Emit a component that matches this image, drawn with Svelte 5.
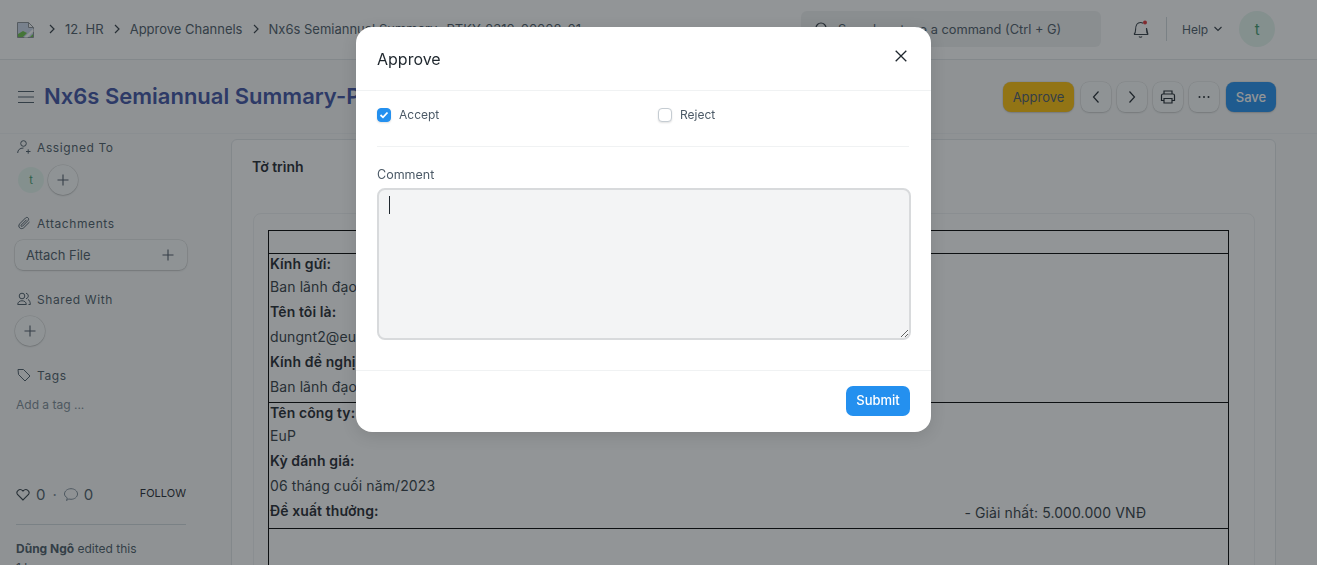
<script>
  let accepted = $state(true);
  let rejected = $state(false);

  const crumbs = ['12. HR', 'Approve Channels', 'Nx6s Semiannual Summary- PTKY-2310-00008-01'];
</script>

{#snippet plus()}
  <svg width="12" height="12" viewBox="0 0 12 12" fill="none" stroke="#4c5a67" stroke-width="1.1"><path d="M6 .5v11M.5 6h11" /></svg>
{/snippet}

<div class="page">
  <header class="navbar">
    <svg class="logo" width="17" height="16" viewBox="0 0 17 16">
      <path d="M.5.5h11l5 5v10H.5z" fill="#cdd9ec" stroke="#8a9096" />
      <path d="M11.500.5v5h5z" fill="#fff" stroke="#8a9096" />
      <path d="M1 15v-3l5-3 4 2-4 4z" fill="#6cc24a" />
      <path d="M13 15l3-3v3z" fill="#6cc24a" />
      <path d="M7 15.500l9.500-9v3l-6 6z" fill="#fff" />
    </svg>
    <nav class="crumbs">
      {#each crumbs as crumb}
        <svg width="8" height="10" viewBox="0 0 8 10" fill="none" stroke="#333c44" stroke-width="1.2"><path d="M2 1l4 4-4 4" /></svg>
        <span>{crumb}</span>
      {/each}
    </nav>
    <div class="search">
      <svg width="16" height="16" viewBox="0 0 16 16" fill="none" stroke="#333c44" stroke-width="1.2"><circle cx="7" cy="7" r="5" /><path d="M11 11l3.5 3.5" /></svg>
      <span>Search or type a command (Ctrl + G)</span>
    </div>
    <svg class="bell" width="18" height="20" viewBox="0 0 18 20" fill="none" stroke="#333c44" stroke-width="1.1">
      <path d="M2 15.500c1.300-1.200 1.600-2.500 1.600-5C3.600 6 5.500 3.500 8.500 3.500c1 0 1.800.2 2.500.7M14.500 9v2c0 2 .5 3.300 1.500 4.500zM2 15.500h14M7 17.500c.6 1 2.400 1 3 0" />
      <circle cx="13" cy="3.500" r="2" fill="#e0353b" stroke="none" />
    </svg>
    <i class="nav-divider"></i>
    <span class="help">Help
      <svg width="10" height="6" viewBox="0 0 10 6" fill="none" stroke="#333c44" stroke-width="1.1"><path d="M1.500 1l3.500 3.500L8.500 1" /></svg>
    </span>
    <span class="avatar big">t</span>
  </header>

  <div class="head">
    <svg class="burger" width="16" height="12" viewBox="0 0 16 12" fill="none" stroke="#4c5a67" stroke-width="1.1"><path d="M0 .5h16M0 6h16M0 11.500h16" /></svg>
    <h1>Nx6s Semiannual Summary-PTKY-2310-00008-01</h1>
    <div class="actions">
      <button class="btn approve">Approve</button>
      <button class="btn icon" aria-label="Previous">
        <svg width="10" height="14" viewBox="0 0 10 14" fill="none" stroke="#1f272e" stroke-width="1.2"><path d="M7.500 1.500L2.500 7l5 5.500" /></svg>
      </button>
      <button class="btn icon" aria-label="Next">
        <svg width="10" height="14" viewBox="0 0 10 14" fill="none" stroke="#1f272e" stroke-width="1.2"><path d="M2.500 1.500L7.500 7l-5 5.500" /></svg>
      </button>
      <button class="btn icon" aria-label="Print">
        <svg width="16" height="14" viewBox="0 0 16 14" fill="none" stroke="#1f272e" stroke-width="1.2"><path d="M4 4V1h8v3M4 10.500H1.500V5.500q0-1.500 1.500-1.500h10q1.500 0 1.500 1.500v5H12M4 8.500h8v4.500H4z" /></svg>
      </button>
      <button class="btn icon" aria-label="More">
        <svg width="12" height="4" viewBox="0 0 12 4" fill="#1f272e"><circle cx="1.500" cy="2" r="1" /><circle cx="6" cy="2" r="1" /><circle cx="10.500" cy="2" r="1" /></svg>
      </button>
      <button class="btn save">Save</button>
    </div>
  </div>

  <div class="body">
    <aside class="sidebar">
      <section class="assigned">
        <h4>
          <svg width="14" height="14" viewBox="0 0 14 14" fill="none" stroke="#4c5a67"><circle cx="6.500" cy="3.500" r="2.800" /><path d="M.7 13c0-3 2-5 5.800-5M9 11.500h4.500M11.200 9.300v4.400" /></svg>
          Assigned To
        </h4>
        <div class="row">
          <span class="avatar">t</span>
          <span class="circle">{@render plus()}</span>
        </div>
      </section>
      <section class="attachments">
        <h4>
          <svg width="14" height="14" viewBox="0 0 14 14" fill="none" stroke="#4c5a67"><path d="M12.500 6l-5.800 5.800c-3 2.400-6.500-1-4-4L8.600 1.900c1.800-1.500 4 .7 2.600 2.500L5.500 10.200c-.9.800-2-.3-1.200-1.200L9.500 3.800" /></svg>
          Attachments
        </h4>
        <div class="attach">
          <span>Attach File</span>
          {@render plus()}
        </div>
      </section>
      <section class="shared">
        <h4>
          <svg width="14" height="14" viewBox="0 0 14 14" fill="none" stroke="#4c5a67"><circle cx="5" cy="4" r="2.800" /><path d="M.7 12.500c0-5 8.600-5 8.600 0zM9 1.300c3 .3 3 5 0 5.300M11 7.500c1.500.6 2.300 2.500 2.300 5H11.500" /></svg>
          Shared With
        </h4>
        <span class="circle">{@render plus()}</span>
      </section>
      <section class="tags">
        <h4>
          <svg width="14" height="14" viewBox="0 0 14 14" fill="none" stroke="#4c5a67"><path d="M1 1.500h5.500l6.500 6.500-5 5L1.500 6.500zM4 4h.1" /></svg>
          Tags
        </h4>
        <span class="add-tag">Add a tag ...</span>
      </section>
      <div class="likes">
        <svg width="14" height="13" viewBox="0 0 14 13" fill="none" stroke="#333c44" stroke-width="1.100"><path d="M7 12L1.500 6.500C-.5 3.500 3.500-.5 7 3c3.500-3.500 7.500.5 5.500 3.500z" /></svg>
        <span>0</span>
        <span class="dot">·</span>
        <svg width="14" height="13" viewBox="0 0 14 13" fill="none" stroke="#7d8a96" stroke-width="1"><path d="M2.500 12.500l.8-2.600C1.500 8.800.5 7.500.5 6 .5 3 3.500.7 7 .7s6.500 2.300 6.500 5.300-3 5.300-6.500 5.300c-.8 0-1.500-.1-2.200-.3z" /></svg>
        <span>0</span>
        <span class="follow">FOLLOW</span>
      </div>
      <div class="activity">
        <p><b>Dũng Ngô</b> edited this</p>
        <p>1 hour ago</p>
      </div>
    </aside>

    <main class="card">
      <h3>Tờ trình</h3>
      <div class="inner">
        <table>
          <tbody>
            <tr class="blank"><td colspan="2"></td></tr>
            <tr>
              <td colspan="2">
                <b>Kính gửi:</b>
                <p>Ban lãnh đạo công ty</p>
                <b>Tên tôi là:</b>
                <p>dungnt2@eup.net.vn</p>
                <b>Kính đề nghị:</b>
                <p>Ban lãnh đạo xem xét</p>
              </td>
            </tr>
            <tr>
              <td class="left">
                <b>Tên công ty:</b>
                <p>EuP</p>
                <b>Kỳ đánh giá:</b>
                <p>06 tháng cuối năm/2023</p>
                <b>Đề xuất thưởng:</b>
              </td>
              <td class="prize">- Giải nhất: 5.000.000 VNĐ</td>
            </tr>
            <tr class="tall"><td colspan="2"></td></tr>
          </tbody>
        </table>
      </div>
    </main>
  </div>

  <div class="backdrop">
    <div class="modal">
      <div class="modal-head">
        <h2>Approve</h2>
        <button class="close" aria-label="Close">
          <svg width="12" height="12" viewBox="0 0 12 12" fill="none" stroke="#1f272e" stroke-width="1.300"><path d="M.7.7l10.600 10.600M11.300.7L.7 11.300" /></svg>
        </button>
      </div>
      <div class="modal-body">
        <div class="checks">
          <label class="check">
            <input type="checkbox" bind:checked={accepted} />
            <span class="box" class:on={accepted}>
              {#if accepted}
                <svg width="10" height="8" viewBox="0 0 10 8" fill="none" stroke="#fff" stroke-width="1.800"><path d="M1.500 4l2.500 2.300L8.500 1.500" /></svg>
              {/if}
            </span>
            Accept
          </label>
          <label class="check">
            <input type="checkbox" bind:checked={rejected} />
            <span class="box" class:on={rejected}></span>
            Reject
          </label>
        </div>
        <div class="field">
          <span class="field-label">Comment</span>
          <div class="area-wrap">
            <textarea></textarea>
            <i class="caret"></i>
          </div>
        </div>
      </div>
      <div class="modal-foot">
        <button class="submit">Submit</button>
      </div>
    </div>
  </div>
</div>

<style>
  :global(body) {
    margin: 0;
    font-family: Inter, "Noto Sans", sans-serif;
    background: #f9fafa;
    color: #1f272e;
  }

  .page {
    height: 565px;
    overflow: hidden;
    font-size: 13px;
  }

  .navbar {
    height: 58px;
    padding-bottom: 1px;
    border-bottom: 1px solid #e2e6e9;
    background: #fff;
    display: flex;
    align-items: center;
    padding-left: 17px;
    color: #4c5a67;
  }

  .logo {
    margin-top: 2px;
    flex: none;
  }

  .crumbs {
    width: 753px;
    margin-left: 14px;
    display: flex;
    align-items: center;
    gap: 9px;
    white-space: nowrap;
    overflow: hidden;
  }

  .search {
    width: 300px;
    height: 36px;
    flex: none;
    box-sizing: border-box;
    padding-left: 13px;
    margin-right: 31px;
    background: #f0f1f2;
    border-radius: 6px;
    display: flex;
    align-items: center;
    gap: 8px;
    white-space: nowrap;
    font-size: 12.800px;
  }

  .bell {
    flex: none;
  }

  .nav-divider {
    width: 1px;
    height: 24px;
    margin: 0 15px 0 16px;
    background: #d1d8dd;
  }

  .help {
    display: flex;
    align-items: center;
    gap: 5px;
    font-size: 12px;
  }

  .avatar {
    width: 26px;
    height: 26px;
    border-radius: 50%;
    background: #e5f5ee;
    color: #3f9a6b;
    font-size: 11px;
    display: flex;
    align-items: center;
    justify-content: center;
    flex: none;
  }

  .avatar.big {
    width: 36px;
    height: 36px;
    margin-left: 16px;
    font-size: 15px;
  }

  .head {
    height: 74px;
    display: flex;
    align-items: center;
    padding: 0 41px 0 18px;
    background: #f9fafa;
    border-bottom: 1px solid #f0f2f3;
    box-sizing: border-box;
  }

  .burger {
    flex: none;
  }

  h1 {
    margin: -2px 0 0 10px;
    width: 800px;
    flex: none;
    color: #3f51a3;
    font-size: 22px;
    font-weight: 600;
    white-space: nowrap;
    overflow: hidden;
  }

  .actions {
    margin-left: auto;
    display: flex;
    align-items: center;
    gap: 6px;
  }

  .btn {
    height: 30px;
    border: 0;
    border-radius: 8px;
    font: inherit;
    padding: 0;
    display: flex;
    align-items: center;
    justify-content: center;
    box-shadow: 0 0 0 .5px rgba(0, 0, 0, .1), 0 1px 2px rgba(0, 0, 0, .15);
  }

  .btn.icon {
    width: 30px;
    background: #fafbfb;
  }

  .approve {
    width: 71px;
    margin-right: 1px;
    background: #ffc007;
    color: #4c5a67;
  }

  .save {
    width: 50px;
    margin-left: 1px;
    background: #2490ef;
    color: #fff;
    font-weight: 500;
  }

  .body {
    display: flex;
    align-items: flex-start;
  }

  .sidebar {
    width: 171px;
    flex: none;
    margin: 0 44px 0 16px;
    color: #4c5a67;
  }

  h4 {
    margin: 0;
    font-size: 12px;
    font-weight: 400;
    letter-spacing: .6px;
    display: flex;
    align-items: center;
    gap: 6px;
    height: 16px;
  }

  .assigned {
    padding-top: 5px;
    padding-left: 1px;
    height: 81px;
    box-sizing: border-box;
  }

  .row {
    margin-top: 10px;
    display: flex;
    align-items: center;
    gap: 4px;
    margin-left: 1px;
  }

  .circle {
    width: 30px;
    height: 30px;
    border-radius: 50%;
    background: #fafbfb;
    box-shadow: 0 0 0 .5px rgba(0, 0, 0, .14), 0 1px 2px rgba(0, 0, 0, .15);
    display: flex;
    align-items: center;
    justify-content: center;
  }

  .attachments {
    height: 76px;
  }

  .attachments h4,
  .shared h4,
  .tags h4 {
    margin-left: 1px;
  }

  .attach {
    margin: 9px 0 0 -1px;
    height: 30px;
    box-sizing: border-box;
    padding: 0 13px 0 11px;
    border-radius: 8px;
    background: #fafbfb;
    box-shadow: 0 0 0 .5px rgba(0, 0, 0, .14), 0 1px 2px rgba(0, 0, 0, .15);
    display: flex;
    align-items: center;
    justify-content: space-between;
    font-size: 13px;
  }

  .shared {
    height: 76px;
  }

  .shared .circle {
    margin: 9px 0 0 -1px;
  }

  .tags {
    height: 112px;
  }

  .add-tag {
    display: block;
    margin-top: 14px;
    font-size: 12px;
    color: #7d8a96;
  }

  .likes {
    height: 30px;
    width: 170px;
    display: flex;
    align-items: center;
    gap: 6px;
    border-bottom: 1px solid #d1d8dd;
    padding-bottom: 15px;
    font-size: 15px;
    color: #4c5a67;
  }

  .dot {
    margin: 0 1px;
    color: #7d8a96;
  }

  .follow {
    margin: 0 0 2px auto;
    font-size: 11px;
    color: #1f272e;
  }

  .activity {
    margin-top: 16px;
    font-size: 12px;
  }

  .activity p {
    margin: 0 0 3px;
    line-height: 16px;
  }

  .card {
    width: 1045px;
    flex: none;
    height: 600px;
    margin-top: 5px;
    box-sizing: border-box;
    background: #fff;
    border: 1px solid #e2e6e9;
    border-radius: 6px;
    padding: 19px 20px 0;
  }

  h3 {
    margin: 0;
    font-size: 14px;
    font-weight: 600;
    line-height: 16px;
  }

  .inner {
    margin: 38px 0 0 1px;
    border: 1px solid #f0f2f3;
    border-radius: 8px;
    padding: 16px 25px 0 14px;
  }

  table {
    width: 100%;
    border-collapse: collapse;
    font-size: 14px;
    letter-spacing: .1px;
    color: #333c44;
  }

  td {
    border: 1px solid #000;
    padding: 0 1px 2px;
    box-sizing: border-box;
    vertical-align: top;
    line-height: 25px;
  }

  .blank td {
    height: 23px;
    padding: 0;
  }

  td b {
    display: block;
    font-weight: 600;
    color: #1f272e;
    line-height: 24px;
  }

  td b:first-child {
    line-height: 20px;
  }

  td p {
    margin: 0;
    line-height: 26px;
  }

  .left {
    width: 695px;
    border-right: 0;
    padding-bottom: 5px;
  }

  .prize {
    border-left: 0;
    vertical-align: bottom;
    padding-bottom: 3px;
  }

  .tall td {
    height: 100px;
  }

  .backdrop {
    position: fixed;
    inset: 0;
    background: rgba(28, 34, 38, .48);
  }

  .modal {
    width: 575px;
    margin: 27px 0 0 356px;
    background: #fff;
    border-radius: 16px;
    box-shadow: 0 4px 16px rgba(0, 0, 0, .12);
    color: #1f272e;
  }

  .modal-head {
    height: 64px;
    box-sizing: border-box;
    padding: 0 24px 0 21px;
    border-bottom: 1px solid #f0f2f3;
    display: flex;
    align-items: center;
    justify-content: space-between;
  }

  h2 {
    margin: 1px 0 0;
    font-size: 16px;
    font-weight: 400;
  }

  .close {
    border: 0;
    padding: 0;
    background: none;
    display: flex;
    margin-bottom: 6px;
  }

  .modal-body {
    padding: 0 20px 0 21px;
    height: 280px;
    box-sizing: border-box;
    border-bottom: 1px solid #f0f2f3;
  }

  .checks {
    display: grid;
    grid-template-columns: 281px 1fr;
    height: 56px;
    width: 532px;
    align-items: center;
    border-bottom: 1px solid #f0f2f3;
    box-sizing: border-box;
    padding-bottom: 8px;
  }

  .check {
    display: flex;
    align-items: center;
    gap: 8px;
    font-size: 12px;
    color: #4c5a67;
  }

  .check input {
    display: none;
  }

  .box {
    width: 14px;
    height: 14px;
    box-sizing: border-box;
    border-radius: 4px;
    background: #fff;
    border: 1px solid #c5ccd2;
    box-shadow: 0 1px 2px rgba(0, 0, 0, .12);
    display: flex;
    align-items: center;
    justify-content: center;
  }

  .box.on {
    background: #2490ef;
    border-color: #2490ef;
  }

  .field {
    margin-top: 20px;
    width: 534px;
  }

  .field-label {
    display: block;
    font-size: 12.500px;
    line-height: 16px;
    color: #4c5a67;
  }

  .area-wrap {
    position: relative;
    margin-top: 5px;
  }

  textarea {
    display: block;
    width: 100%;
    height: 152px;
    box-sizing: border-box;
    background: #f3f4f5;
    border: 2px solid #d8dadc;
    border-radius: 8px;
    outline: 0;
    resize: vertical;
    margin: 0;
  }

  .caret {
    position: absolute;
    left: 12px;
    top: 8px;
    width: 1px;
    height: 18px;
    background: #1f272e;
  }

  .modal-foot {
    height: 61px;
    box-sizing: border-box;
    padding: 15px 21px 0 0;
    display: flex;
    justify-content: flex-end;
    align-items: flex-start;
  }

  .submit {
    width: 64px;
    height: 30px;
    border: 0;
    border-radius: 7px;
    background: #2490ef;
    color: #fff;
    font: inherit;
    font-size: 13px;
    font-weight: 500;
    padding: 0 0 2px;
  }
</style>
